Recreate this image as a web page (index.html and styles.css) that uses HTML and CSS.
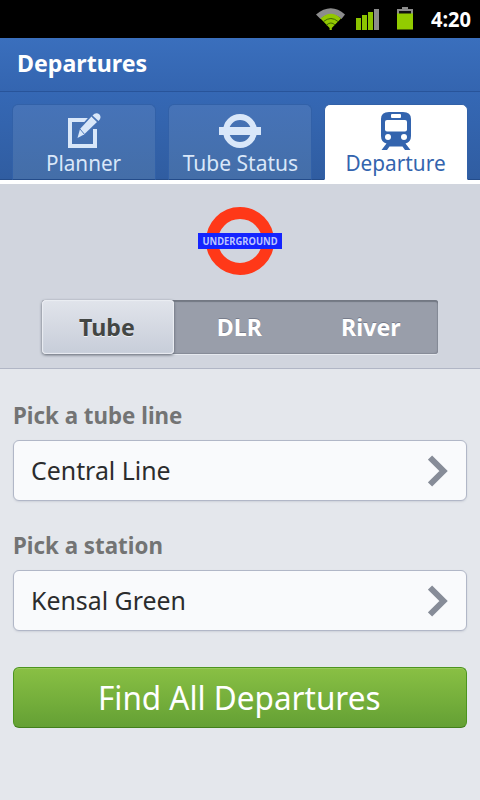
FILE: index.html
```html
<!DOCTYPE html>
<html lang="en">
<head>
<meta charset="utf-8">
<title>Departures</title>
<link rel="stylesheet" href="styles.css">
</head>
<body>
<div class="status">
  <svg class="wifi" width="30" height="24" viewBox="0 0 30 24"><path d="M0 6.500Q15-6 29 6.500L25.500 11Q15 2 4.500 11Z" fill="#8c8c8c"/><path d="M4.500 10.500Q15 1 25 10.500L15.800 20V22H13.600V20Z" fill="#92c800"/><path d="M7.500 13.500Q15 7.500 22 13.500M10.500 17Q15 13 19 17" fill="none" stroke="#3e6500" stroke-width="1"/></svg>
  <svg class="signal" width="24" height="22" viewBox="0 0 24 22"><path d="M0 10h5v12H0zM6 7h5v15H6zM12 4h5v18h-5z" fill="#8cc400"/><path d="M18 1h5v21h-5z" fill="#8c8c8c"/></svg>
  <svg class="battery" width="17" height="23" viewBox="0 0 17 23"><path d="M5 2V0h6v2h5v5H0V2z" fill="#8c8c8c"/><path d="M2 4h12v3H2z" fill="#111"/><path d="M0 6.500h16V22.500H0z" fill="#92cc00"/></svg>
  <span class="t clock">4:20</span>
</div>
<header class="header"><h1 class="t title">Departures</h1></header>
<nav class="tabs">
  <a class="tab">
    <svg width="36" height="38" viewBox="0 0 36 38"><path d="M22 9H4V35H29V18" fill="none" stroke="#d9e7f9" stroke-width="4"/><path d="M25.500 5.500L31 11L17.500 24L11.500 27L13.500 19Z" fill="#d9e7f9" stroke="#4672b5" stroke-width="3.500"/><path d="M25.500 5.500L31 11L18 23.500L11.500 27L14 18Z" fill="#d9e7f9"/><path d="M26.500 4.500Q30 .8 33.500 3.500Q36 6.500 32.500 10Z" fill="#d9e7f9"/><path d="M25.800 5.300L31.600 10.800M14 18L18.200 23" stroke="#4d78b9" stroke-width="1"/></svg>
    <span class="t planner">Planner</span>
  </a>
  <a class="tab">
    <svg width="42" height="38" viewBox="0 0 42 38"><circle cx="21" cy="20" r="14" fill="none" stroke="#d9e7f9" stroke-width="6"/><path d="M0 16h42v8H0z" fill="#d9e7f9"/></svg>
    <span class="t tube-status">Tube Status</span>
  </a>
  <a class="tab active">
    <svg width="32" height="40" viewBox="0 0 32 40"><path d="M9 1H23Q31 1 31 8V25Q31 31 25.500 32.500L30.500 39H25L22.500 35.500H9.500L7 39H1.500L6.500 32.500Q1 31 1 25V8Q1 1 9 1Z" fill="#3364ae"/><rect x="11" y="3" width="10" height="4" rx="1" fill="#fff"/><rect x="5" y="9" width="22" height="11.500" rx="2" fill="#fff"/><circle cx="8" cy="26" r="3" fill="#fff"/><circle cx="24" cy="26" r="3" fill="#fff"/></svg>
    <span class="t departure">Departure</span>
  </a>
</nav>
<section class="mode">
  <svg class="roundel" width="84" height="68" viewBox="0 0 84 68"><circle cx="42" cy="34" r="28" fill="none" stroke="#ff3818" stroke-width="12"/><path d="M0 26h84v16H0z" fill="#1424ff"/><text x="42" y="38" text-anchor="middle" textLength="75" lengthAdjust="spacingAndGlyphs">UNDERGROUND</text></svg>
  <div class="segments">
    <button class="segment selected"><span class="t tube">Tube</span></button>
    <button class="segment"><span class="t dlr">DLR</span></button>
    <button class="segment"><span class="t river">River</span></button>
  </div>
</section>
<main class="form">
  <div class="label"><span class="t line">Pick a tube line</span></div>
  <div class="field"><span class="t central">Central Line</span><svg width="20" height="32" viewBox="0 0 20 32"><path d="M2 2.500L15.500 16L2 29.500" fill="none" stroke="#878c98" stroke-width="6"/></svg></div>
  <div class="label"><span class="t station">Pick a station</span></div>
  <div class="field"><span class="t kensal">Kensal Green</span><svg width="20" height="32" viewBox="0 0 20 32"><path d="M2 2.500L15.500 16L2 29.500" fill="none" stroke="#878c98" stroke-width="6"/></svg></div>
  <button class="submit"><span class="t find">Find All Departures</span></button>
</main>
</body>
</html>
```
FILE: styles.css
```css
* { box-sizing: border-box; }
body { margin: 0; width: 480px; height: 800px; overflow: hidden; background: #e4e7ec; font-family: "Noto Sans", "Open Sans", sans-serif; }
button { font-family: inherit; border: 0; padding: 0; background: none; }
.t { display: inline-block; white-space: nowrap; transform-origin: 0 50%; }
.status { height: 38px; background: #000; display: flex; align-items: flex-start; padding-left: 316px; }
.wifi { margin-top: 8px; }
.signal { margin: 8px 0 0 10px; }
.battery { margin: 7px 0 0 17px; }
.clock { color: #fff; font-size: 21px; font-weight: 700; line-height: 24px; margin: 7px 0 0 17px; transform: scaleX(.955); }
.header { height: 54px; padding: 0 17px; background: linear-gradient(#3a6fbd, #3465b0); border-bottom: 1px solid #28549a; }
.title { margin: 0; color: #fff; font-size: 24px; line-height: 50px; font-weight: 700; transform: scaleX(.965); }
.tabs { height: 92px; padding: 12px 12px 0; display: flex; gap: 12px; background: linear-gradient(#3568b5, #305da1 87px, #244c8a 87px, #244c8a 88px, #fff 88px); }
.tab { width: 144px; height: 76px; border: 1px solid #3261a8; border-bottom: 1px solid #244c8a; border-radius: 6px 6px 0 0; background: linear-gradient(#4673b8, #446ea8); color: #d9e7f9; display: flex; flex-direction: column; align-items: center; padding-top: 6px; font-size: 22px; line-height: 26px; }
.tab svg { flex: none; }
.tab .t { transform-origin: 50% 50%; }
.planner { transform: translateX(-.5px) scaleX(.94); }
.tube-status { transform: scaleX(.955); }
.departure { transform: translateX(-.5px) scaleX(.945); }
.active { background: #fff; color: #3364ae; border-bottom-color: #fff; }
.active svg { margin-bottom: -2px; }
.mode { height: 185px; background: #d1d5de; border-bottom: 1px solid #b1b6c5; display: flex; flex-direction: column; align-items: center; padding-top: 23px; }
.roundel { flex: none; }
.roundel text { font: 700 10px "Noto Sans"; fill: #bcc5ff; }
.segments { width: 396px; height: 54px; margin-top: 25px; display: flex; background: #999eaa; border-radius: 3px; box-shadow: inset 0 2px 1px #737883, inset -1px -1px 1px #858a96, 0 1px #e6e9ef; }
.segment { width: 132px; height: 54px; color: #fff; font-size: 24px; font-weight: 700; text-shadow: 0 -1px #777c8b; }
.segment .t { transform-origin: 50% 50%; transform: translate(-1px, -1px) scaleX(.965); }
.selected { color: #434644; text-shadow: 0 1px #eef0f4; border-radius: 4px; background: linear-gradient(#e1e4eb, #c7cdd9); box-shadow: inset 0 0 1px 1px #eceef3, 0 1px 3px #555c69; }
.form { padding: 30px 13px 0; }
.label { height: 41px; color: #737474; font-size: 23px; line-height: 32px; font-weight: 700; }
.label .t { transform: scaleX(.97); }
.field { height: 61px; margin-bottom: 28px; padding: 0 18px 0 17px; display: flex; align-items: center; justify-content: space-between; background: #f9fafc; border: 1px solid #b1b7c7; border-radius: 6px; box-shadow: 0 1px 2px #cdd1d9; color: #2b2c2d; font-size: 26px; }
.field .t { padding-bottom: 2px; transform: scaleX(.957); }
.submit { display: block; width: 454px; height: 61px; margin-top: 36px; border: 1px solid #4c951f; border-bottom-color: #427f1b; border-radius: 6px; background: linear-gradient(#89c044, #64a034); box-shadow: inset 0 1px #99c95b; color: #fff; font-size: 33px; }
.submit .t { transform-origin: 50% 50%; transform: translateX(-1px) scaleX(.953); }
```
